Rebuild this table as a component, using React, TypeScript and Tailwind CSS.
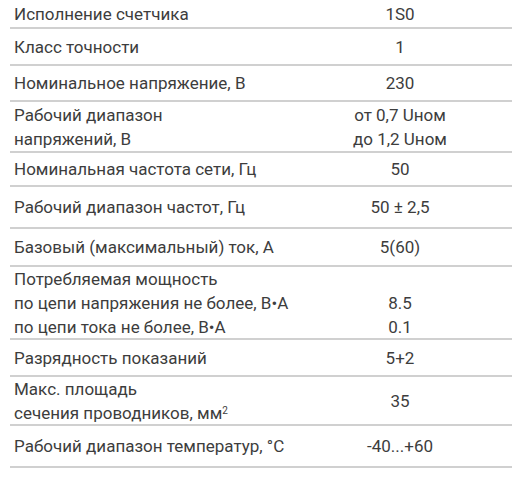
const rows: { label: React.ReactNode; value: React.ReactNode; h: string }[] = [
  { label: 'Исполнение счетчика', value: '1S0', h: 'h-[29px]' },
  { label: 'Класс точности', value: '1', h: 'h-[37px]' },
  { label: 'Номинальное напряжение, В', value: '230', h: 'h-[36px]' },
  {
    label: (
      <>
        Рабочий диапазон
        <br />
        напряжений, В
      </>
    ),
    value: (
      <>
        от 0,7 Uном
        <br />
        до 1,2 Uном
      </>
    ),
    h: 'h-[51px]',
  },
  { label: 'Номинальная частота сети, Гц', value: '50', h: 'h-[34px]' },
  { label: 'Рабочий диапазон частот, Гц', value: '50 ± 2,5', h: 'h-[42px]' },
  { label: 'Базовый (максимальный) ток, А', value: '5(60)', h: 'h-[38px]' },
  {
    label: (
      <>
        Потребляемая мощность
        <br />
        по цепи напряжения не более, В•А
        <br />
        по цепи тока не более, В•А
      </>
    ),
    value: (
      <>
        &nbsp;
        <br />
        8.5
        <br />
        0.1
      </>
    ),
    h: 'h-[73px]',
  },
  { label: 'Разрядность показаний', value: '5+2', h: 'h-[37px]' },
  {
    label: (
      <>
        Макс. площадь
        <br />
        сечения проводников, мм<sup className="text-[10px]">2</sup>
      </>
    ),
    value: '35',
    h: 'h-[49px]',
  },
  { label: 'Рабочий диапазон температур, °С', value: '-40...+60', h: 'h-[42px]' },
];

export default function App() {
  return (
    <div className="w-[522px] h-[482px] bg-white font-['Roboto','Liberation_Sans',sans-serif] text-[17px] leading-[24px] text-[#3d3d3d]">
      <div className="ml-[10px] w-[502px]">
        {rows.map((r, i) => (
          <div key={i} className={`flex items-center border-b-2 border-[#d0d0d0] ${r.h}`}>
            <div className="flex-1 min-w-0 pl-[4px] whitespace-nowrap">{r.label}</div>
            <div className="w-[224px] shrink-0 text-center whitespace-nowrap">{r.value}</div>
          </div>
        ))}
      </div>
    </div>
  );
}
